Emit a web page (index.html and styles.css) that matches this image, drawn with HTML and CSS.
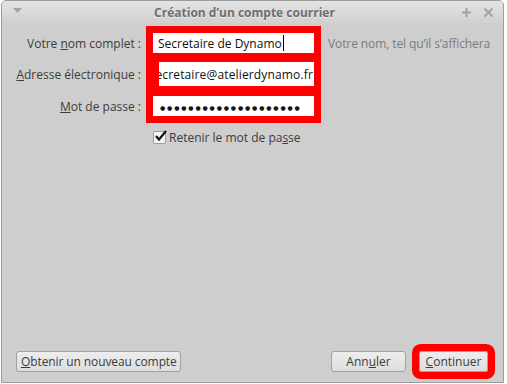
FILE: index.html
```html
<!DOCTYPE html>
<html lang="fr">
<head>
<meta charset="utf-8">
<title>Création d’un compte courrier</title>
<link rel="stylesheet" href="styles.css">
</head>
<body>
<div class="window">
  <div class="titlebar">
    <span class="tb-menu"><svg width="9" height="6" viewBox="0 0 9 6"><path d="M0 0 H9 L4.5 5 Z" fill="#a3a3a3"/></svg></span>
    <span class="tb-title">Création d’un compte courrier</span>
    <span class="tb-btns">
      <svg width="11" height="11" viewBox="0 0 11 11"><path d="M5.5 1 V10 M1 5.5 H10" stroke="#a3a3a3" stroke-width="2"/></svg>
      <svg width="11" height="11" viewBox="0 0 11 11"><path d="M1.5 1.5 L9.5 9.5 M9.5 1.5 L1.5 9.5" stroke="#a3a3a3" stroke-width="2"/></svg>
    </span>
  </div>
  <div class="content">
    <div class="form">
      <label class="lbl">Votre <u>n</u>om complet :</label>
      <div class="field mark"><span>Secretaire de Dynamo</span><span class="caret"></span></div>
      <span class="hint">Votre nom, tel qu’il s’affichera</span>

      <label class="lbl"><u>A</u>dresse électronique :</label>
      <div class="field mark scrolled"><span>secretaire@atelierdynamo.fr</span></div>
      <span></span>

      <label class="lbl"><u>M</u>ot de passe :</label>
      <div class="field mark pwd"><span>●●●●●●●●●●●●●●●●●●●●</span></div>
      <span></span>
    </div>
    <div class="checkrow">
      <span class="check"><svg width="13" height="12" viewBox="0 0 13 12"><path d="M2 6 L5 9.5 L12 1" stroke="#111" stroke-width="2.2" fill="none"/></svg></span>
      <span>Retenir le mot de pa<u>s</u>se</span>
    </div>
    <div class="buttons">
      <button class="btn wide"><u>O</u>btenir un nouveau compte</button>
      <span class="spacer"></span>
      <button class="btn cancel">Ann<u>u</u>ler</button>
      <button class="btn primary mark"><u>C</u>ontinuer</button>
    </div>
  </div>
</div>
</body>
</html>
```
FILE: styles.css
```css
html, body {
  margin: 0;
  padding: 0;
  background: #ffffff;
}
body {
  font-family: "Open Sans", "DejaVu Sans", sans-serif;
  font-size: 12px;
  color: #3c3c3c;
}
.window {
  margin-left: 1px;
  width: 501px;
  height: 381px;
  border: 1px solid #9c9c9c;
  border-radius: 5px 5px 0 0;
  background: #cecece;
  display: flex;
  flex-direction: column;
  overflow: hidden;
}
.titlebar {
  height: 22px;
  flex: none;
  display: flex;
  align-items: center;
  background: linear-gradient(#e4e4e4, #d0d0d0);
}
.tb-menu {
  width: 9px;
  margin-left: 11px;
  display: flex;
  margin-top: -2px;
}
.tb-title {
  flex: 1;
  text-align: center;
  font-weight: bold;
  font-size: 12px;
  color: #6e6e6e;
  text-shadow: 0 1px 0 #eeeeee;
  margin-left: 6px;
}
.tb-btns {
  display: flex;
  gap: 11px;
  margin-right: 9px;
}
.content {
  flex: 1;
  display: flex;
  flex-direction: column;
  padding: 10px 15px 10px 14px;
  min-width: 0;
}
.form {
  display: grid;
  grid-template-columns: 125px 161px minmax(0, 1fr);
  column-gap: 12px;
  row-gap: 10px;
  align-items: center;
}
.lbl {
  text-align: right;
  white-space: nowrap;
  color: #3c3c3c;
}
.field {
  height: 20px;
  background: #ffffff;
  display: flex;
  align-items: center;
  padding: 0 5px;
  overflow: hidden;
  white-space: nowrap;
  color: #111;
  box-sizing: border-box;
}
.mark {
  box-shadow: 0 0 0 7px #ff0000;
}
.caret {
  display: inline-block;
  width: 1px;
  height: 16px;
  background: #000;
  margin-left: 1px;
}
.scrolled {
  justify-content: flex-end;
  padding: 0 1px 0 0;
  border-left: 6px solid #ff0000;
  height: 24px;
  margin-top: -1px;
  letter-spacing: 0.15px;
}
.pwd {
  padding-left: 7px;
  padding-top: 3px;
}
.pwd span {
  font-family: "DejaVu Sans", sans-serif;
  font-size: 6px;
  letter-spacing: 1.85px;
  color: #151515;
}
.hint {
  color: #7b7b7b;
  white-space: nowrap;
  overflow: visible;
  letter-spacing: -0.1px;
  margin-left: 2px;
}
.checkrow {
  display: flex;
  align-items: center;
  margin-top: 13px;
  margin-left: 137px;
  gap: 3px;
}
.check {
  width: 11px;
  height: 11px;
  background: #f4f4f4;
  border: 1px solid #9d9d9d;
  border-radius: 2px;
  position: relative;
}
.check svg {
  position: absolute;
  left: 0;
  top: -2px;
}
.buttons {
  margin-top: auto;
  display: flex;
  align-items: center;
  gap: 13px;
}
.spacer {
  flex: 1;
}
.btn {
  font-family: inherit;
  font-size: 12px;
  color: #3c3c3c;
  height: 21px;
  padding: 0 4px;
  border: 1px solid #a2a2a2;
  border-radius: 3px;
  background: linear-gradient(#ededed, #dedede);
  margin: 0;
  white-space: nowrap;
}
.wide {
  width: 165px;
  letter-spacing: -0.1px;
}
.cancel {
  width: 75px;
}
.primary {
  width: 69px;
}
```
